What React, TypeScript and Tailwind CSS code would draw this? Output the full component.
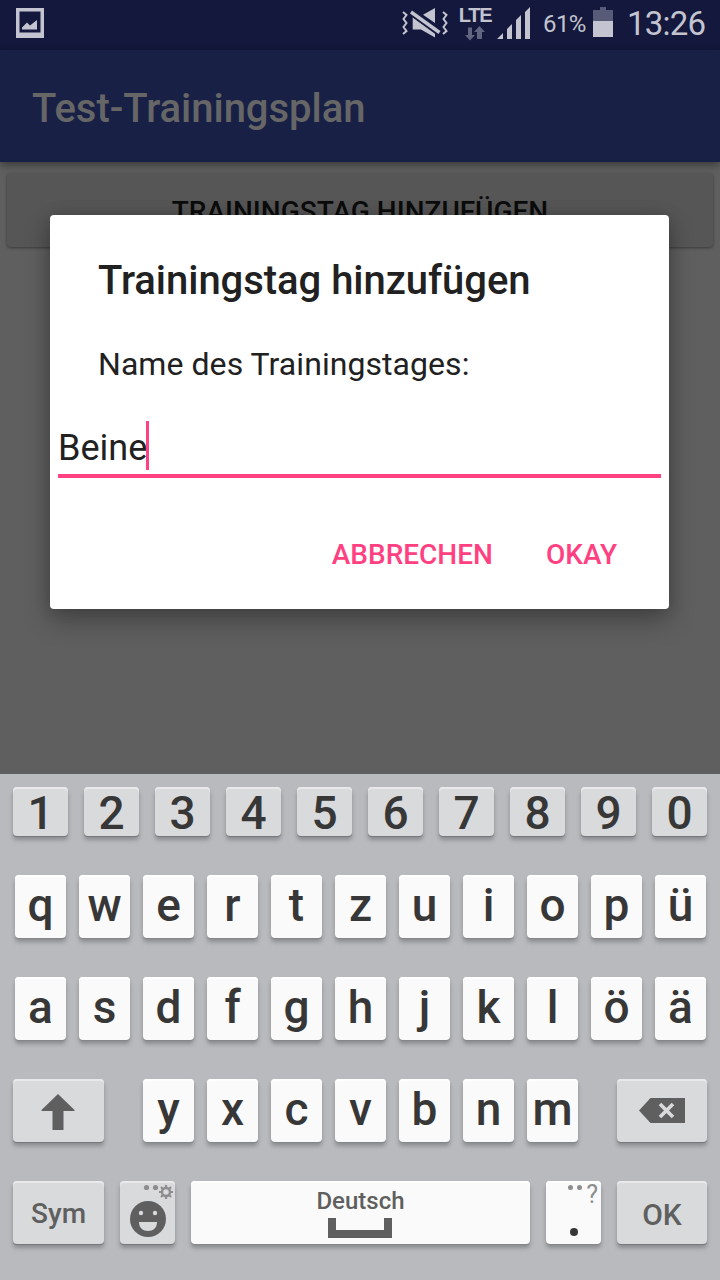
import type { ReactNode } from 'react';

const DIGITS = ['1', '2', '3', '4', '5', '6', '7', '8', '9', '0'];
const TOP_ROW = ['q', 'w', 'e', 'r', 't', 'z', 'u', 'i', 'o', 'p', 'ü'];
const HOME_ROW = ['a', 's', 'd', 'f', 'g', 'h', 'j', 'k', 'l', 'ö', 'ä'];
const BOTTOM_ROW = ['y', 'x', 'c', 'v', 'b', 'n', 'm'];

function LetterKey({ label }: { label: string }) {
  return (
    <button className="flex h-[63px] w-[51px] justify-center rounded-[4px] bg-[#fafafa] text-[46px] font-medium leading-[60px] text-[#373737] shadow-[inset_0_2px_0_#ffffff,0_1px_0_#85868a,0_4px_4px_rgba(0,0,0,0.25)]">
      {label}
    </button>
  );
}

function GreyKey({ className, children }: { className: string; children: ReactNode }) {
  return (
    <button
      className={`flex shrink-0 rounded-[4px] bg-[#d9dadc] shadow-[inset_0_2px_0_#e9e9eb,0_1px_0_#77787c,0_4px_4px_rgba(0,0,0,0.25)] ${className}`}
    >
      {children}
    </button>
  );
}

function StatusBar() {
  return (
    <header className="flex h-[50px] items-start bg-[#13183c] pl-4 text-[#c3c4cf]">
      <svg className="mt-2 h-[30px] w-7" viewBox="0 0 28 30" fill="currentColor">
        <path fillRule="evenodd" d="M0 0h28v30H0zM3.500 3.500v21h21v-21z" />
        <path d="M6 21.500v-2l5-5 3 3 7-5.500v9.500z" />
      </svg>
      <svg className="ml-[357px] mt-[7px] h-8 w-12" viewBox="0 0 48 32" fill="currentColor">
        <path d="M34 1v15L22 7.700z" />
        <path d="M11.700 10.500L34 26.800V30.500L20 22.500h-8.300z" />
        <path d="M10 5l28.500 20.500" stroke="#13183c" strokeWidth="6" />
        <path d="M10 5l28.500 20.500" stroke="currentColor" strokeWidth="3.400" />
        <path
          d="M2 5l3.500 3L2.500 12l3 4-3 4 3 4L2 27M42 5l3.500 3-3 4 3 4-3 4 3 4-3.500 3"
          fill="none"
          stroke="currentColor"
          strokeWidth="2"
        />
      </svg>
      <div className="ml-[9px] flex h-[42px] w-[34px] flex-col items-center pt-[7px]">
        <span className="font-['Liberation_Sans',sans-serif] text-[20px] font-bold leading-[16px] tracking-[-1.2px]">LTE</span>
        <svg className="mt-[3px] h-[15px] w-5" viewBox="0 0 20 15" fill="#62657f">
          <path d="M3 1.500h4v7.500h3l-5 5.500L0 9h3zM12 13V6H9l5.500-6L20 6h-3v7z" />
        </svg>
      </div>
      <svg className="ml-[5px] mt-[7px] h-8 w-[34px]" viewBox="0 0 34 32" fill="currentColor">
        <path d="M0 32l6-6v6zM10 22l5-5v15h-5zM19 13l5-5v24h-5zM28 5l5-5v32h-5z" />
      </svg>
      <span className="ml-3 mt-3 w-[44px] text-[24px] leading-[24px] tracking-[-0.600px]">61%</span>
      <svg className="ml-[6px] mt-[7px] h-[30px] w-5" viewBox="0 0 20 30">
        <path d="M0 3h7V0h6v3h7v11H0z" fill="#585b78" />
        <path d="M0 14h20v16H0z" fill="#c3c4cf" />
      </svg>
      <span className="ml-[14px] mt-[8px] text-[33px] leading-[32px] tracking-[-0.8px]">13:26</span>
    </header>
  );
}

function Dialog() {
  return (
    <section
      role="dialog"
      className="absolute left-[50px] top-[215px] flex h-[394px] w-[619px] flex-col rounded-[4px] bg-white text-[#212121] shadow-[0_12px_26px_rgba(0,0,0,0.28),0_0_16px_rgba(0,0,0,0.16)]"
    >
      <h2 className="mt-[42px] pl-12 text-[40px] font-medium leading-[48px] tracking-[-0.04px]">Trainingstag hinzufügen</h2>
      <p className="mt-[39px] pl-12 text-[32px] leading-[40px] tracking-[0.06px]">Name des Trainingstages:</p>
      <div className="mx-2 mt-[37px] flex h-[57px] items-start border-b-4 border-[#ff4081] text-[36px] leading-[54px]">
        <span className="w-[88px]">Beine</span>
        <span className="h-[49px] w-[3px] bg-[#ff4081]" />
      </div>
      <div className="mt-[57px] flex justify-end gap-[53px] pr-[52px] text-[28px] font-medium leading-[40px] text-[#ff4081]">
        <button>ABBRECHEN</button>
        <button>OKAY</button>
      </div>
    </section>
  );
}

function Keyboard() {
  return (
    <section className="h-[506px] bg-[#b9babe] pt-[13px]">
      <div className="flex gap-4 pl-[13px]">
        {DIGITS.map((d) => (
          <GreyKey key={d} className="h-[49px] w-[55px] justify-center text-[46px] font-medium leading-[52px] text-[#373737]">
            {d}
          </GreyKey>
        ))}
      </div>
      <div className="mt-[39px] flex gap-[13px] pl-[15px]">
        {TOP_ROW.map((c) => (
          <LetterKey key={c} label={c} />
        ))}
      </div>
      <div className="mt-[39px] flex gap-[13px] pl-[15px]">
        {HOME_ROW.map((c) => (
          <LetterKey key={c} label={c} />
        ))}
      </div>
      <div className="mt-[39px] flex justify-between px-[13px]">
        <GreyKey className="h-[63px] w-[91px] items-center justify-center">
          <svg className="mr-px mt-[3px] h-9 w-[34px]" viewBox="0 0 34 36" fill="#5f5f5f">
            <path d="M17 0l16.500 16v1H22.500v19h-11V17H.5v-1z" />
          </svg>
        </GreyKey>
        <div className="flex gap-[13px]">
          {BOTTOM_ROW.map((c) => (
            <LetterKey key={c} label={c} />
          ))}
        </div>
        <GreyKey className="h-[63px] w-[90px] items-center justify-center">
          <svg className="h-[25px] w-[46px]" viewBox="0 0 46 25">
            <path d="M0 12.500L11.500 0H46v25H11.500z" fill="#5f5f5f" />
            <path d="M21 6l13 13M34 6L21 19" stroke="#d9dadc" strokeWidth="3.600" />
          </svg>
        </GreyKey>
      </div>
      <div className="mt-[39px] flex justify-between px-[13px]">
        <GreyKey className="h-[63px] w-[91px] justify-center text-[28px] font-medium leading-[66px] text-[#5f5f5f]">Sym</GreyKey>
        <GreyKey className="h-[63px] w-[55px]">
          <svg className="h-[63px] w-[55px]" viewBox="0 0 55 63">
            <g fill="#8d8d8e">
              <circle cx="26.500" cy="6.500" r="2.600" />
              <circle cx="35.500" cy="6.500" r="2.600" />
            </g>
            <g fill="none" stroke="#8d8d8e">
              <circle cx="46" cy="11" r="4" strokeWidth="2.400" />
              <path d="M46 4v3M46 15v3M39 11h3M50 11h3M41 6l2.200 2.200M48.800 13.800L51 16M51 6l-2.200 2.200M43.200 13.800L41 16" strokeWidth="2.200" />
            </g>
            <circle cx="28" cy="38" r="18" fill="#5f5f5f" />
            <g fill="#d9dadc">
              <circle cx="21" cy="32" r="2.200" />
              <circle cx="35" cy="32" r="2.200" />
              <path d="M19 41h18c0 6-4 9-9 9s-9-3-9-9z" />
            </g>
          </svg>
        </GreyKey>
        <button className="flex h-[63px] w-[339px] flex-col items-center rounded-[4px] bg-[#fafafa] shadow-[inset_0_2px_0_#ffffff,0_1px_0_#85868a,0_4px_4px_rgba(0,0,0,0.25)]">
          <span className="mt-[6px] text-[24px] font-medium leading-[28px] text-[#5f5f5f]">Deutsch</span>
          <span className="mr-px mt-[3px] h-5 w-16 border-8 border-t-0 border-[#5f5f5f]" />
        </button>
        <button className="flex h-[63px] w-[55px] flex-col rounded-[4px] bg-[#fafafa] shadow-[inset_0_2px_0_#ffffff,0_1px_0_#85868a,0_4px_4px_rgba(0,0,0,0.25)]">
          <span className="flex h-[44px] items-start gap-1 self-end pr-[3px]">
            <span className="mt-1 size-[5px] rounded-full bg-[#8d8d8e]" />
            <span className="mt-1 size-[5px] rounded-full bg-[#8d8d8e]" />
            <span className="text-[25px] leading-[27px] text-[#8d8d8e]">?</span>
          </span>
          <span className="ml-[24px] mt-[3px] size-2 rounded-full bg-[#373737]" />
        </button>
        <GreyKey className="h-[63px] w-[90px] justify-center text-[30px] font-medium leading-[67px] text-[#5f5f5f]">OK</GreyKey>
      </div>
    </section>
  );
}

export default function App() {
  return (
    <main className="relative flex h-[1280px] w-[720px] flex-col overflow-hidden bg-[#5f5f5f] font-['Roboto',sans-serif]">
      <StatusBar />
      <div className="flex h-[112px] items-center bg-[#192046] pl-8 pt-[6px] text-[40px] font-medium tracking-[-0.04px] text-[#666666] shadow-[0_3px_8px_rgba(0,0,0,0.4)]">
        Test-Trainingsplan
      </div>
      <div className="h-[612px] px-[7px] pt-[11px]">
        <button className="flex h-[74px] w-full items-center justify-center rounded-[4px] bg-[#565656] pt-[3px] text-[28px] font-medium text-[#0c0c0c] shadow-[0_1px_3px_rgba(0,0,0,0.4)]">
          TRAININGSTAG HINZUFÜGEN
        </button>
      </div>
      <Keyboard />
      <Dialog />
    </main>
  );
}
